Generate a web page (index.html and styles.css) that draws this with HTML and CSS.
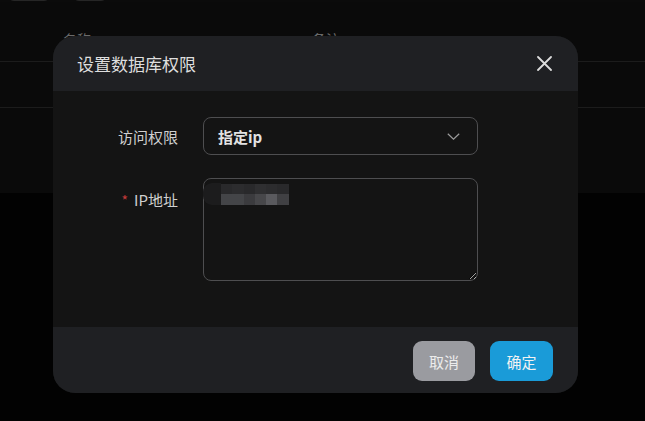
FILE: index.html
```html
<!DOCTYPE html>
<html lang="zh">
<head>
<meta charset="utf-8">
<title>设置数据库权限</title>
<link rel="stylesheet" href="styles.css">
</head>
<body>
<div class="page">
  <div class="toolbar">
    <span class="tb-btn tb-btn-a"></span>
    <span class="tb-btn tb-btn-b"></span>
  </div>
  <div class="table">
    <div class="thead">
      <span class="th th-name">名称</span>
      <span class="th th-note">备注</span>
    </div>
    <div class="trow"></div>
    <div class="trow trow-last"></div>
  </div>
</div>

<div class="overlay">
  <div class="modal">
    <div class="modal-header">
      <span class="modal-title">设置数据库权限</span>
      <svg class="close" width="15" height="15" viewBox="0 0 15 15"><path d="M1 1L14 14M14 1L1 14" stroke="#dcdcdc" stroke-width="1.8" stroke-linecap="round"/></svg>
    </div>
    <div class="modal-body">
      <div class="form-row">
        <label class="form-label">访问权限</label>
        <div class="select">
          <span class="select-value">指定ip</span>
          <svg class="chev" width="13" height="7" viewBox="0 0 13 7"><path d="M0.8 0.8L6.5 6.2L12.2 0.8" fill="none" stroke="#9a9a9a" stroke-width="1.2"/></svg>
        </div>
      </div>
      <div class="form-row">
        <label class="form-label form-label-tall"><span class="req">*</span>IP地址</label>
        <div class="textarea-wrap">
          <textarea class="textarea"></textarea>
          <div class="blur">
            <span class="blur-smear"></span>
            <div class="blur-grid">
              <i class="c1"></i><i class="c2"></i><i class="c1"></i><i class="c3"></i><i class="c2"></i><i class="c1"></i>
              <i class="d1"></i><i class="d1"></i><i class="d2"></i><i class="d3"></i><i class="d4"></i><i class="d5"></i>
            </div>
          </div>
        </div>
      </div>
    </div>
    <div class="modal-footer">
      <button class="btn btn-cancel">取消</button>
      <button class="btn btn-ok">确定</button>
    </div>
  </div>
</div>
</body>
</html>
```

FILE: styles.css
```css
* { box-sizing: border-box; }
html, body { margin: 0; padding: 0; }
body {
  width: 645px;
  height: 421px;
  overflow: hidden;
  background: #020202;
  font-family: "Noto Sans CJK SC", "Noto Sans", sans-serif;
  position: relative;
}
.page { background: #020202; }
.toolbar {
  height: 2px;
  display: flex;
  gap: 8px;
  padding-left: 7px;
  background: #0b0b0b;
}
.tb-btn {
  display: block;
  height: 30px;
  margin-top: -29px;
  border: 1px solid #262626;
  border-radius: 7px;
}
.tb-btn-a { width: 44px; }
.tb-btn-b { width: 36px; margin-left: 13px; }
.table {
  background: #0a0a0a;
  padding-top: 14px;
}
.thead {
  height: 46px;
  border-bottom: 1px solid #1c1c1c;
  position: relative;
  font-size: 14px;
  line-height: 20px;
  color: #6a6a6a;
}
.th { position: absolute; top: 13px; }
.th-name { left: 63px; }
.th-note { left: 312px; }
.trow {
  height: 46px;
  border-bottom: 1px solid #1c1c1c;
}
.trow-last { height: 85px; border-bottom: none; }

.overlay {
  position: absolute;
  inset: 0;
  padding: 36px 0 0 53px;
}
.modal {
  width: 525px;
  height: 357px;
  border-radius: 22px;
  overflow: hidden;
  background: #141414;
  display: flex;
  flex-direction: column;
}
.modal-header {
  height: 55px;
  background: #1f2023;
  display: flex;
  align-items: center;
  justify-content: space-between;
  padding: 0 26px 0 24px;
}
.modal-title {
  font-size: 17px;
  color: #dedede;
  line-height: 24px;
  margin-top: 1px;
}
.close { display: block; }
.modal-body {
  height: 236px;
  background: #141414;
  padding-top: 26px;
  display: flex;
  flex-direction: column;
  gap: 23px;
}
.form-row {
  display: flex;
  align-items: flex-start;
}
.form-label {
  width: 150px;
  flex: none;
  padding-right: 25px;
  text-align: right;
  font-size: 15px;
  line-height: 38px;
  height: 38px;
  margin-top: 1px;
  color: #cfcfcf;
}
.form-label-tall { line-height: 40px; height: 40px; }
.req {
  color: #c43a3a;
  margin-right: 6px;
  font-size: 14px;
}
.select {
  width: 275px;
  height: 38px;
  border: 1px solid #4e4e50;
  border-radius: 8px;
  display: flex;
  align-items: center;
  justify-content: space-between;
  padding: 0 17px 0 14px;
}
.select-value {
  font-size: 15px;
  font-weight: 700;
  color: #e2e2e2;
}
.chev { display: block; margin-top: 1px; }
.textarea-wrap {
  position: relative;
  width: 275px;
  height: 103px;
  margin-top: -1px;
}
.textarea {
  display: block;
  width: 275px;
  height: 103px;
  background: #141414;
  border: 1px solid #4e4e50;
  border-radius: 8px;
  color: #ddd;
  resize: both;
  outline: none;
  color-scheme: dark;
}
.blur {
  position: absolute;
  left: 0;
  top: 5px;
  display: flex;
  align-items: center;
}
.blur-smear {
  display: block;
  width: 18px;
  height: 22px;
  border-radius: 9px 0 0 9px;
  background: #1c1c1d;
}
.blur-grid {
  display: grid;
  grid-template-columns: repeat(6, 11.3px);
  grid-template-rows: 10px 11px;
}
.blur-grid i { display: block; }
.c1 { background: #29292b; }
.c2 { background: #2c2c2e; }
.c3 { background: #2f2f31; }
.d1 { background: #444548; }
.d2 { background: #3b3b3e; }
.d3 { background: #47474a; }
.d4 { background: #5a5a5e; }
.d5 { background: #404043; }

.modal-footer {
  flex: 1;
  background: #1f2023;
  display: flex;
  justify-content: flex-end;
  align-items: flex-start;
  gap: 15px;
  padding: 14px 25px 0 0;
}
.btn {
  height: 40px;
  border: none;
  border-radius: 9px;
  font-family: "Noto Sans CJK SC", "Noto Sans", sans-serif;
  font-size: 15px;
  padding: 0;
}
.btn-cancel {
  width: 62px;
  background: #9a9ba0;
  color: #ececec;
}
.btn-ok {
  width: 63px;
  background: #1a9bd8;
  color: #f2f2f2;
}
```
